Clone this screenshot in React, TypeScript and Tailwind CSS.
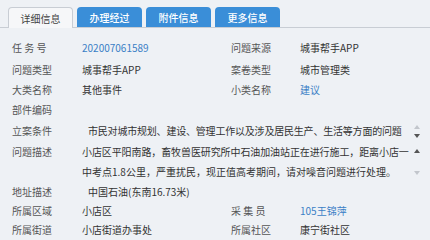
import React from 'react';

const font = { fontFamily: '"Noto Sans CJK SC", "Noto Sans", sans-serif' };

function Arrow({ up, dark }: { up?: boolean; dark?: boolean }) {
  return (
    <svg width="6" height="4" viewBox="0 0 6 4">
      <polygon points={up ? '0,4 6,4 3,0' : '0,0 6,0 3,4'} fill={dark ? '#555' : '#c2c6cc'} />
    </svg>
  );
}

function Tabs() {
  const tabs = ['办理经过', '附件信息', '更多信息'];
  return (
    <div className="flex items-end gap-[4px] pl-[8px] pt-[7px] border-b border-[#c8cdd4] h-[28px]">
      <div className="w-[65px] h-[21px] -mb-px flex items-center justify-center rounded-t-[4px] border border-b-0 border-[#c8cdd4] bg-[#f6f7f9] text-[10px] text-[#444]">
        详细信息
      </div>
      {tabs.map((t) => (
        <div
          key={t}
          className="w-[65px] h-[20px] flex items-center justify-center rounded-t-[4px] bg-[#3a8ed8] text-[10px] font-medium text-white"
        >
          {t}
        </div>
      ))}
    </div>
  );
}

function Row({
  h,
  l1,
  v1,
  l2,
  v2,
  blue1,
  blue2,
}: {
  h: string;
  l1: string;
  v1?: string;
  l2?: string;
  v2?: string;
  blue1?: boolean;
  blue2?: boolean;
}) {
  return (
    <div className={`grid grid-cols-[70px_149px_69px_1fr] items-center ${h}`}>
      <div className="text-[#555]">{l1}</div>
      <div className={blue1 ? 'text-[#3b7fc6]' : 'text-[#333]'}>{v1}</div>
      <div className="text-[#555]">{l2}</div>
      <div className={blue2 ? 'text-[#3b7fc6]' : 'text-[#333]'}>{v2}</div>
    </div>
  );
}

export default function App() {
  return (
    <div className="w-[430px] h-[240px] overflow-hidden bg-[#eef1f5]" style={font}>
      <Tabs />
      <div className="pl-[12px] pt-[9px] text-[10px] leading-[20px]">
        <Row h="h-[22px]" l1="任 务 号" v1="202007061589" blue1 l2="问题来源" v2="城事帮手APP" />
        <Row h="h-[21px]" l1="问题类型" v1="城事帮手APP" l2="案卷类型" v2="城市管理类" />
        <Row h="h-[20px]" l1="大类名称" v1="其他事件" l2="小类名称" v2="建议" blue2 />
        <Row h="h-[20px]" l1="部件编码" />
        <div className="flex h-[22px] items-center">
          <div className="w-[70px] text-[#555]">立案条件</div>
          <div className="w-[330px] pl-[6px] text-[#333] tracking-[-0.2px] whitespace-nowrap">
            市民对城市规划、建设、管理工作以及涉及居民生产、生活等方面的问题
          </div>
          <div className="w-[10px] h-[22px] flex flex-col items-center justify-center gap-[5px]">
            <Arrow up />
            <Arrow up={false} dark />
          </div>
        </div>
        <div className="flex h-[40px]">
          <div className="w-[70px] text-[#555]">问题描述</div>
          <div className="w-[330px] text-[#333] whitespace-nowrap">
            <div className="tracking-[-0.1px]">小店区平阳南路，畜牧兽医研究所中石油加油站正在进行施工，距离小店一</div>
            <div>中考点1.8公里，严重扰民，现正值高考期间，请对噪音问题进行处理。</div>
          </div>
          <div className="w-[10px] h-[40px] flex flex-col items-center justify-between pt-[7px] pb-[7px]">
            <Arrow up dark />
            <Arrow up={false} />
          </div>
        </div>
        <div className="flex h-[19px] items-center">
          <div className="w-[70px] text-[#555]">地址描述</div>
          <div className="pl-[6px] text-[#333]">中国石油(东南16.73米)</div>
        </div>
        <Row h="h-[19px]" l1="所属区域" v1="小店区" l2="采 集 员" v2="105王锦萍" blue2 />
        <Row h="h-[19px]" l1="所属街道" v1="小店街道办事处" l2="所属社区" v2="康宁街社区" />
      </div>
    </div>
  );
}
